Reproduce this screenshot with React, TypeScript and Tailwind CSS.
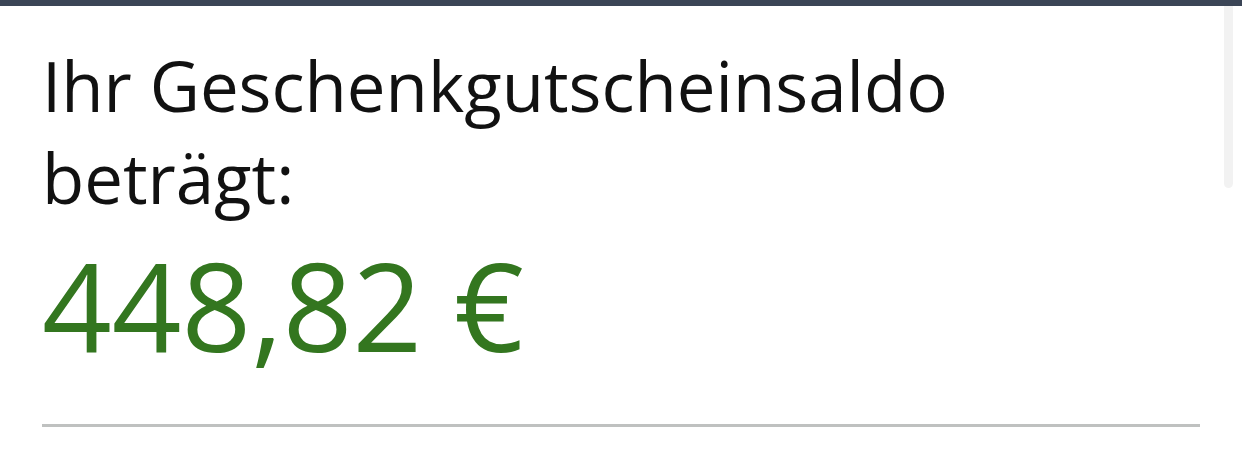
import React from 'react';

const App = () => {
  return (
    <div className="relative h-[467px] w-[1242px] overflow-hidden bg-white" style={{ fontFamily: '"Open Sans", "Noto Sans", sans-serif' }}>
      <div className="h-[6px] w-full bg-[#3b4556]" />

      {/* scrollbar */}
      <div className="absolute right-[9px] top-[6px] h-[182px] w-[9px] rounded-b-full bg-[#f2f2f2]" />

      <div className="px-[42px] pt-[33px]">
        <h1 className="text-[69px] font-normal leading-[92px] text-[#111111]">
          Ihr Geschenkgutscheinsaldo
          <br />
          beträgt:
        </h1>
        <p className="mt-[21px] text-[122px] leading-[122px] text-[#33761f]">448,82 €</p>
        <div className="mt-[58px] h-[3px] w-full bg-[#bfc1c0]" />
      </div>
    </div>
  );
};

export default App;
